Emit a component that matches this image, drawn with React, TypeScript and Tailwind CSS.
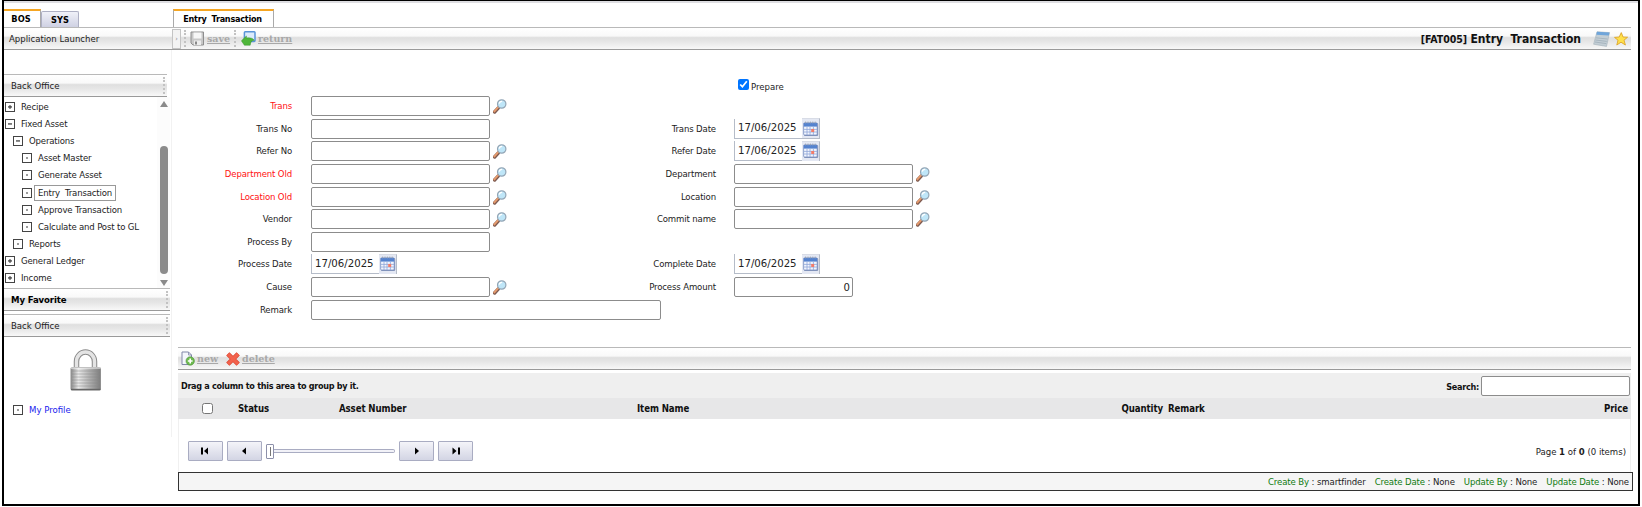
import type { ReactNode } from "react";

const BAR =
  "border-t border-b border-t-[#b9b9b9] border-b-[#9a9a9a] bg-[linear-gradient(to_bottom,#ffffff_0%,#f9f9f9_38%,#dfdfdf_46%,#e6e6e6_65%,#f8f8f8_100%)]";

type NodeKind = "plus" | "minus" | "dot";

interface TreeItem {
  label: string;
  kind: NodeKind;
  indent: string;
  selected?: boolean;
}

const TREE: TreeItem[] = [
  { label: "Recipe", kind: "plus", indent: "pl-[1px]" },
  { label: "Fixed Asset", kind: "minus", indent: "pl-[1px]" },
  { label: "Operations", kind: "minus", indent: "pl-[9px]" },
  { label: "Asset Master", kind: "dot", indent: "pl-[18px]" },
  { label: "Generate Asset", kind: "dot", indent: "pl-[18px]" },
  { label: "Entry  Transaction", kind: "dot", indent: "pl-[18px]", selected: true },
  { label: "Approve Transaction", kind: "dot", indent: "pl-[18px]" },
  { label: "Calculate and Post to GL", kind: "dot", indent: "pl-[18px]" },
  { label: "Reports", kind: "dot", indent: "pl-[9px]" },
  { label: "General Ledger", kind: "plus", indent: "pl-[1px]" },
  { label: "Income", kind: "plus", indent: "pl-[1px]" },
];

function NodeIcon({ kind }: { kind: NodeKind }) {
  return (
    <svg width="10" height="10" viewBox="0 0 10 10" className="shrink-0">
      <rect x="0.5" y="0.5" width="9" height="9" fill="#fff" stroke="#444" />
      {kind === "dot" && <rect x="4.3" y="4.3" width="1.4" height="1.4" fill="#333" />}
      {kind !== "dot" && <rect x="3" y="4.4" width="4" height="1.1" fill="#222" />}
      {kind === "plus" && <rect x="4.5" y="3" width="1" height="4" fill="#333" />}
    </svg>
  );
}

function Grip({ className = "" }: { className?: string }) {
  return <div className={`w-0 border-l-2 border-dotted border-[#c2c2c2] ${className}`} />;
}

function SearchIcon() {
  return (
    <svg width="14" height="15" viewBox="0 0 14 15" className="shrink-0">
      <path d="M5.4 8.8 L1.6 13" stroke="#7d5a50" strokeWidth="3.4" strokeLinecap="round" />
      <path d="M5 8.4 L1.4 12.4" stroke="#e59a6c" strokeWidth="2" strokeLinecap="round" />
      <circle cx="8.7" cy="5" r="4.2" fill="#bfe6f8" stroke="#93a5b5" strokeWidth="1.2" />
      <path d="M6.2 4.6 A2.8 2.8 0 0 1 9.2 2.3" stroke="#fff" strokeWidth="1.3" fill="none" />
    </svg>
  );
}

function CalendarIcon() {
  return (
    <svg width="16" height="16" viewBox="0 0 16 16">
      <rect x="1" y="2" width="14.2" height="13" rx="1" fill="#8a98ba" />
      <rect x="0.6" y="1.8" width="13.6" height="12.2" rx="1" fill="#f2f5fd" stroke="#6d86bd" strokeWidth="0.7" />
      <rect x="0.8" y="2" width="13.2" height="3.6" fill="#5583cf" />
      <path d="M2.6 0.6v1.8M5 0.6v1.8M7.4 0.6v1.8M9.8 0.6v1.8M12.2 0.6v1.8" stroke="#9aa3b3" strokeWidth="1" />
      <path d="M1 8.4h13M1 11h13M4 6v8M7 6v8M10.4 6v8" stroke="#8fa6d8" strokeWidth="0.8" />
      <rect x="8.2" y="8" width="3" height="3" fill="#f27c69" />
    </svg>
  );
}

function Label({ children, required }: { children: ReactNode; required?: boolean }) {
  return <span className={`tracking-[-0.13px] ${required ? "text-[#ff1010]" : "text-[#1c1c1c]"}`}>{children}</span>;
}

const INPUT = "h-[20px] shrink-0 rounded-[2px] border border-[#8c8c8c] bg-white";

function TextField({ width = "w-[179px]", lookup, value }: { width?: string; lookup?: boolean; value?: string }) {
  return (
    <div className="flex items-center">
      <input
        defaultValue={value}
        className={`${INPUT} ${width} pr-[2px] text-right text-[11.2px] text-[#222] outline-none`}
      />
      {lookup && (
        <div className="pl-[3px] pt-[1px]">
          <SearchIcon />
        </div>
      )}
    </div>
  );
}

function DateField() {
  return (
    <div className="flex h-[20px] w-[86px] items-center justify-between border-b border-l border-b-[#b5bcc8] border-l-[#b5bcc8] pl-[3px] text-[11.3px] text-[#222]">
      <span>17/06/2025</span>
      <div className="flex h-[20px] w-[18px] items-center justify-center border-r border-t border-r-[#b5bcc8] border-t-[#d8dce6] bg-[#e4e8f3]">
        <CalendarIcon />
      </div>
    </div>
  );
}

interface Field {
  label: string;
  type: "text" | "lookup" | "date" | "amount" | "wide";
  required?: boolean;
}

const ROWS: [Field, Field | null][] = [
  [{ label: "Trans", type: "lookup", required: true }, null],
  [{ label: "Trans No", type: "text" }, { label: "Trans Date", type: "date" }],
  [{ label: "Refer No", type: "lookup" }, { label: "Refer Date", type: "date" }],
  [{ label: "Department Old", type: "lookup", required: true }, { label: "Department", type: "lookup" }],
  [{ label: "Location Old", type: "lookup", required: true }, { label: "Location", type: "lookup" }],
  [{ label: "Vendor", type: "lookup" }, { label: "Commit name", type: "lookup" }],
  [{ label: "Process By", type: "text" }, null],
  [{ label: "Process Date", type: "date" }, { label: "Complete Date", type: "date" }],
  [{ label: "Cause", type: "lookup" }, { label: "Process Amount", type: "amount" }],
  [{ label: "Remark", type: "wide" }, null],
];

function Control({ field }: { field: Field }) {
  if (field.type === "date") return <DateField />;
  if (field.type === "amount") return <TextField width="w-[119px]" value="0" />;
  if (field.type === "wide") return <TextField width="w-[350px]" />;
  return <TextField lookup={field.type === "lookup"} />;
}

function Form() {
  return (
    <div className="h-[297px] pt-[27px]">
      <div className="flex h-[18px] items-center pl-[566px]">
        <input type="checkbox" defaultChecked className="mb-[4px] size-[11px]" />
        <span className="pl-[2px] pt-[1px] text-[#1c1c1c]">Prepare</span>
      </div>
      {ROWS.map(([left, right]) => (
        <div key={left.label} className="flex h-[22.6px] items-center">
          <div className="w-[120px] shrink-0 text-right">
            <Label required={left.required}>{left.label}</Label>
          </div>
          <div className="w-[304px] shrink-0 pl-[19px]">
            <Control field={left} />
          </div>
          {right && (
            <>
              <div className="w-[120px] shrink-0 text-right">
                <Label>{right.label}</Label>
              </div>
              <div className="pl-[18px]">
                <Control field={right} />
              </div>
            </>
          )}
        </div>
      ))}
    </div>
  );
}

function PanelBar({ children, bold, width = "w-[166px]" }: { children: ReactNode; bold?: boolean; width?: string }) {
  return (
    <div className={`flex h-[23px] items-center justify-between pl-[7px] pr-[2px] ${width} ${BAR}`}>
      <span className={bold ? "font-bold tracking-[-0.1px] text-black" : "text-[#1c1c1c]"}>{children}</span>
      <Grip className="h-[17px]" />
    </div>
  );
}

function LockIcon() {
  return (
    <svg width="32" height="42" viewBox="0 0 32 42">
      <defs>
        <linearGradient id="lockBody" x1="0" x2="1" y1="0" y2="0">
          <stop offset="0" stopColor="#8d8d8d" />
          <stop offset="0.25" stopColor="#e9e9e9" />
          <stop offset="0.6" stopColor="#b4b4b4" />
          <stop offset="1" stopColor="#7d7d7d" />
        </linearGradient>
      </defs>
      <path d="M6.5 19V12.5a9 9.5 0 0 1 18 0V19" fill="none" stroke="#8b8b8b" strokeWidth="5.5" />
      <path d="M6.5 19V12.5a9 9.5 0 0 1 18 0V19" fill="none" stroke="#e4e4e4" strokeWidth="3.4" />
      <rect x="1" y="18.5" width="29.5" height="22.5" rx="1" fill="url(#lockBody)" stroke="#909090" />
      <path d="M2 22h28M2 25h28M2 28h28M2 31h28M2 34h28M2 37h28" stroke="#888" strokeWidth="0.8" opacity="0.6" />
      <path d="M1 19h29.5" stroke="#f5f5f5" strokeWidth="1" />
      <path d="M1 40.5h29.5" stroke="#666" strokeWidth="1.4" />
    </svg>
  );
}

function Sidebar() {
  return (
    <aside className="w-[168px] shrink-0">
      <div className="flex h-[26px] items-end pt-[8px] text-[9.2px] font-bold text-black">
        <div className="flex h-[18px] w-[37px] items-center justify-center border-r border-t-2 border-r-[#aaa] border-t-[#f5a623] pr-[2px]">
          BOS
        </div>
        <div className="flex h-[16px] w-[38px] items-center justify-center self-end rounded-t-[2px] border border-b-0 border-[#aeb0c4] bg-linear-to-b from-[#f0f1f8] to-[#cfd1e3]">
          SYS
        </div>
      </div>
      <div className={`flex h-[23px] items-center pl-[5px] text-[#1c1c1c] ${BAR}`}>Application Launcher</div>
      <div className="h-[387px] border-r border-[#f2f2f2]">
        <div className="h-[24px]" />
        <PanelBar width="w-[163px]">Back Office</PanelBar>
        <div className="flex h-[191px] w-[166px] justify-between">
          <div className="pt-[1px]">
            {TREE.map((item) => (
              <div key={item.label} className={`flex h-[17.2px] items-center ${item.indent}`}>
                <NodeIcon kind={item.kind} />
                <span
                  className={`ml-[2px] flex h-[16px] items-center whitespace-pre border px-[3px] tracking-[-0.16px] text-[#1c1c1c] ${
                    item.selected ? "border-[#999]" : "border-transparent"
                  }`}
                >
                  {item.label}
                </span>
              </div>
            ))}
          </div>
          <div className="flex w-[13px] flex-col items-center bg-[#fcfcfc] pt-[4px]">
            <svg width="8" height="6" viewBox="0 0 8 6">
              <path d="M4 0L8 6H0z" fill="#8a8a8a" />
            </svg>
            <div className="mt-[39px] h-[128px] w-[8px] rounded-full bg-[#8b8b8b]" />
            <svg width="8" height="6" viewBox="0 0 8 6" className="mt-[6px]">
              <path d="M0 0H8L4 6z" fill="#8a8a8a" />
            </svg>
          </div>
        </div>
        <PanelBar bold>My Favorite</PanelBar>
        <div className="h-[3px]" />
        <PanelBar>Back Office</PanelBar>
        <div className="pl-[66px] pt-[12px]">
          <LockIcon />
        </div>
        <div className="flex items-center gap-[6px] pl-[9px] pt-[12px]">
          <NodeIcon kind="dot" />
          <a className="text-[#1a1aee]">My Profile</a>
        </div>
      </div>
    </aside>
  );
}

function ActionText({ children }: { children: ReactNode }) {
  return (
    <span className="font-['DejaVu_Serif',serif] text-[9.5px] font-bold text-[#a8a8a8] underline">{children}</span>
  );
}

function SaveIcon() {
  return (
    <svg width="15" height="15" viewBox="0 0 15 15">
      <path d="M1 1h12.5v13H3L1 12z" fill="#c8c8c8" stroke="#8e8e8e" />
      <rect x="3.5" y="1.5" width="8" height="6" fill="#f6f6f6" />
      <rect x="4" y="9.5" width="7" height="4.5" fill="#ececec" />
      <rect x="5" y="10.5" width="2" height="3" fill="#888" />
    </svg>
  );
}

function ReturnIcon() {
  return (
    <svg width="15" height="15" viewBox="0 0 15 15">
      <rect x="3.4" y="0.8" width="10.6" height="9.6" rx="0.8" fill="#dcebfb" stroke="#5a94d8" strokeWidth="1.5" />
      <path
        d="M0.4 9.8L5.4 5V7C9.2 6.4 12.4 7.4 13.2 9.4C10.8 9.2 9.6 10.6 9.2 14.2H3.4z"
        fill="#4fb63a"
        stroke="#3a9430"
        strokeWidth="0.5"
      />
    </svg>
  );
}

function NewIcon() {
  return (
    <svg width="14" height="15" viewBox="0 0 14 15">
      <path d="M1 1h6.5L10.5 4v9.5H1z" fill="#f4f6fc" stroke="#8187a8" />
      <path d="M7.5 1v3h3" fill="none" stroke="#8187a8" strokeWidth="0.8" />
      <circle cx="9.2" cy="10" r="4.2" fill="#6dba4e" stroke="#4b9138" strokeWidth="0.6" />
      <path d="M9.2 7.6v4.8M6.8 10h4.8" stroke="#fff" strokeWidth="1.6" />
    </svg>
  );
}

function DeleteIcon() {
  return (
    <svg width="14" height="14" viewBox="0 0 14 14">
      <path d="M1.8 1.8L12.2 12.2M12.2 1.8L1.8 12.2" stroke="#d9452f" strokeWidth="4.6" />
      <path d="M2 2L12 12M12 2L2 12" stroke="#f2624c" strokeWidth="3.2" />
    </svg>
  );
}

function NoteIcon() {
  return (
    <svg width="17" height="16" viewBox="0 0 17 16">
      <path d="M4 0.8L16.5 1.6L13.5 15.4L0.6 13.2z" fill="#c3ced5" stroke="#a5b2ba" strokeWidth="0.6" />
      <path d="M4 0.8L16.5 1.6L15.9 4.6L3.3 3.8z" fill="#6fa5da" />
      <path d="M3 6.8L14.4 8M2.4 9L13.8 10.4M2 11L13.2 12.6" stroke="#a0afb9" strokeWidth="0.8" />
    </svg>
  );
}

function StarIcon() {
  return (
    <svg width="14" height="14" viewBox="0 0 14 14">
      <path
        d="M7.3 0.6L9 5L13.6 5.2L10 8.2L11.4 13L7 10.2L2.8 13L4 8.2L0.5 5.4L5.2 5z"
        fill="#ffe04a"
        stroke="#dda52a"
        strokeWidth="0.9"
      />
    </svg>
  );
}

function TopToolbar() {
  return (
    <div className={`flex h-[23px] items-center ${BAR}`}>
      <div className="flex h-[20px] w-[9px] items-center justify-center border border-[#c4c4c4] bg-[#f3f3f3] text-[7px] text-[#888]">
        ›
      </div>
      <Grip className="ml-[3px] h-[17px]" />
      <div className="ml-[4px]">
        <SaveIcon />
      </div>
      <div className="ml-[2px] w-[24px]">
        <ActionText>save</ActionText>
      </div>
      <Grip className="ml-[3px] h-[17px]" />
      <div className="ml-[5px]">
        <ReturnIcon />
      </div>
      <div className="ml-[2px]">
        <ActionText>return</ActionText>
      </div>
      <div className="ml-auto flex items-center whitespace-pre pr-[3px] font-bold text-[#111]">
        <span className="text-[10.5px]">[FAT005] </span>
        <span className="text-[12px]">Entry  Transaction</span>
        <div className="ml-[12px]">
          <NoteIcon />
        </div>
        <div className="ml-[4px]">
          <StarIcon />
        </div>
      </div>
    </div>
  );
}

function PagerButton({ path }: { path: string }) {
  return (
    <button className="flex h-[20px] w-[35px] items-center justify-center rounded-[1px] border border-[#a9acc2] bg-linear-to-b from-[#f4f4f9] to-[#d3d5e4] pr-[2px]">
      <svg width="10" height="8" viewBox="0 0 10 8">
        <path d={path} fill="#000" />
      </svg>
    </button>
  );
}

const AUDIT = [
  ["Create By", "smartfinder"],
  ["Create Date", "None"],
  ["Update By", "None"],
  ["Update Date", "None"],
];

function Grid() {
  return (
    <div className="ml-[6px]">
      <div className={`flex h-[23px] items-center pl-[3px] ${BAR}`}>
        <NewIcon />
        <div className="ml-[2px] w-[21px]">
          <ActionText>new</ActionText>
        </div>
        <div className="ml-[8px]">
          <DeleteIcon />
        </div>
        <div className="ml-[2px]">
          <ActionText>delete</ActionText>
        </div>
      </div>
      <div className="mt-[3px] flex h-[25px] items-center bg-[#efefef] pl-[3px] text-[9px] font-bold text-[#111]">
        <span className="tracking-[-0.3px]">Drag a column to this area to group by it.</span>
        <span className="ml-auto pr-[2px] pt-[2px] tracking-[-0.25px]">Search:</span>
        <input className={`${INPUT} mr-px w-[149px]`} />
      </div>
      <div className="flex h-[21px] items-center bg-[#e7e7e8] text-[9.6px] font-bold tracking-[-0.1px] text-[#111]">
        <div className="flex w-[60px] pl-[24px]">
          <input type="checkbox" className="size-[11px]" />
        </div>
        <div className="w-[101px]">Status</div>
        <div className="w-[298px]">Asset Number</div>
        <div className="w-[425px]">Item Name</div>
        <div className="w-[101px] text-right">Quantity</div>
        <div className="pl-[5px]">Remark</div>
        <div className="ml-auto pr-[3px]">Price</div>
      </div>
      <div className="flex h-[53px] items-center border-x border-[#f0f0f0] pl-[9px] pr-[4px] pt-[11px]">
        <PagerButton path="M1 0.5h2v7h-2zM8 0.5v7L4 4z" />
        <div className="w-[4px]" />
        <PagerButton path="M7 0.5v7L3 4z" />
        <div className="ml-[4px] flex h-[15px] w-[8px] items-center justify-center rounded-[1px] border border-[#8d90aa] bg-white">
          <div className="h-[9px] w-px bg-[#777]" />
        </div>
        <div className="h-[4px] w-[121px] rounded-r-full border border-l-0 border-[#a9acc2] bg-[#f2f2f8]" />
        <div className="w-[4px]" />
        <PagerButton path="M4 0.5v7L8 4z" />
        <div className="w-[4px]" />
        <PagerButton path="M2.5 0.5v7L6.5 4zM8 0.5h2v7h-2z" />
        <span className="ml-auto pt-px text-[#1c1c1c]">
          Page <b>1</b> of <b>0</b> (0 items)
        </span>
      </div>
      <div className="-mr-[2px] flex h-[19px] items-center justify-end gap-[9px] border border-[#333] bg-[#f5f5f5] pr-[3px] tracking-[-0.11px] text-[#1c1c1c]">
        {AUDIT.map(([label, value]) => (
          <span key={label}>
            <span className="text-[#0f7b0f]">{label}</span> : {value}
          </span>
        ))}
      </div>
    </div>
  );
}

export default function App() {
  return (
    <div className="h-[507px] w-[1642px] bg-white pl-[2px] pr-[2px] font-['DejaVu_Sans_Condensed','Liberation_Sans',sans-serif] text-[9.5px] leading-[14px]">
      <div className="flex h-[506px] border-2 border-t border-black shadow-[inset_0_2px_0_#dedee2]">
        <Sidebar />
        <main className="w-[1459px] shrink-0">
          <div className="flex h-[26px] pt-[8px]">
            <div className="ml-[1px] flex w-[101px] items-center justify-center whitespace-pre border-x border-t-2 border-x-[#aaa] border-t-[#f5a623] pr-[2px] text-[9px] font-bold tracking-[-0.24px] text-black">
              Entry  Transaction
            </div>
          </div>
          <TopToolbar />
          <Form />
          <Grid />
        </main>
      </div>
    </div>
  );
}
